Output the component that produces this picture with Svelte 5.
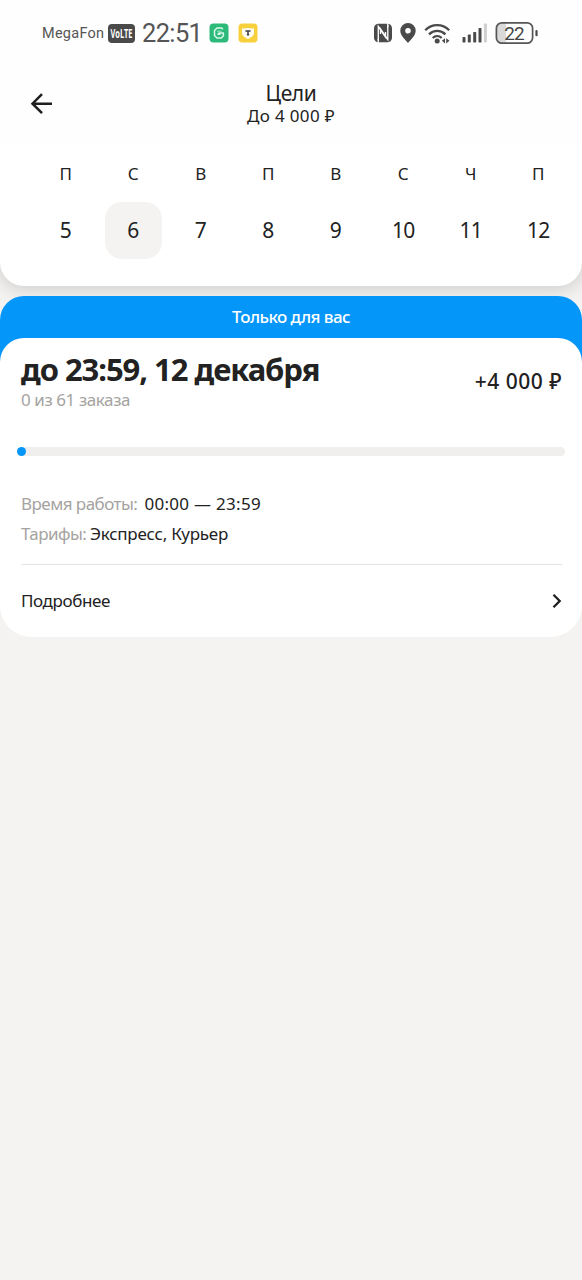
<script>
  const days = [
    ['П', 5], ['С', 6], ['В', 7], ['П', 8], ['В', 9], ['С', 10], ['Ч', 11], ['П', 12],
  ];
  const selected = 6;
</script>

<main>
  <div class="status">
    <span class="carrier">MegaFon</span>
    <span class="volte">
      <svg width="23" height="17" viewBox="0 0 23 17">
        <text x=".5" y="12.7" textLength="22" lengthAdjust="spacingAndGlyphs">VoLTE</text>
      </svg>
    </span>
    <span class="clock">22:51</span>
    <svg class="app-g" width="20" height="20" viewBox="0 0 20 20">
      <rect x=".5" y=".5" width="19" height="19" rx="4" fill="#2cba7a" />
      <path d="M14 6.200 12.600 5H8L5.500 7.600v4.800L8 15h4.200l2.200-2.300V10H10l-1 1.200h2.500" fill="none" stroke="#d9f8e9" stroke-width="1.500" stroke-linejoin="round" />
      <path d="M8 8.200h4.500" stroke="#a6e6c8" stroke-width="1" />
    </svg>
    <svg class="app-t" width="20" height="20" viewBox="0 0 20 20">
      <rect x=".5" y=".5" width="19" height="19" rx="4" fill="#f7d03c" />
      <path d="M4 5.200q3 .8 6-.4 3 1.200 6 .4v4.600c0 3-2.800 4.900-6 6.200-3.200-1.300-6-3.200-6-6.200z" fill="#fffdf2" />
      <path d="M7.400 7.900h5.200M10 7.900V12M8.900 11.800h2.200" stroke="#3b4048" stroke-width="1.500" fill="none" />
    </svg>
    <span class="spacer"></span>
    <svg width="20" height="20" viewBox="0 0 20 20">
      <rect x="1" y=".8" width="18" height="18.400" rx="4.500" fill="#4a4a4a" />
      <path d="M5.300 17.500V3.500L12.500 14V9M14.800 2.500v14L7.500 6v5" fill="none" stroke="#fff" stroke-width="1.350" />
      <path d="M5.300 16v4M14.800 0v4" stroke="#fff" stroke-width="1.350" />
    </svg>
    <svg class="pin" width="16" height="20" viewBox="0 0 16 20">
      <path fill-rule="evenodd" d="M8 0a7.700 7.700 0 0 1 7.700 7.800C15.700 12.500 10.500 17 8 20 5.500 17 .3 12.500.3 7.800A7.700 7.700 0 0 1 8 0m0 4.900a2.800 2.800 0 1 0 0 5.600 2.800 2.800 0 0 0 0-5.600" fill="#4a4a4a" />
    </svg>
    <svg class="wifi" width="27" height="21" viewBox="0 0 27 21">
      <path d="M1.200 7.200c6.800-6.700 17.200-6.700 24 0M5 11.400c4.800-4.600 11.600-4.600 16.400 0M8.700 15c2.700-2.500 6.300-2.500 9 0" fill="none" stroke="#4a4a4a" stroke-width="2.300" />
      <circle cx="13.200" cy="18" r="2.500" fill="#4a4a4a" />
      <path d="m21 15.200-3.100 2.600 3.100 2.600zM22.200 15.200l3.300 2.600-3.300 2.600z" fill="#4a4a4a" />
    </svg>
    <svg class="signal" width="26" height="20" viewBox="0 0 26 20">
      <g fill="#4a4a4a">
        <rect x=".5" y="14" width="3" height="5.500" rx=".7" />
        <rect x="5.800" y="11.500" width="3" height="8" rx=".7" />
        <rect x="11.200" y="9" width="3" height="10.500" rx=".7" />
        <rect x="16.500" y="5" width="3" height="14.500" rx=".7" />
      </g>
      <rect x="21.900" y=".5" width="3" height="19" rx=".7" fill="#d0d0d0" />
    </svg>
    <svg class="battery" width="44" height="24" viewBox="0 0 44 24">
      <path d="M7 2h4v20H7a5 5 0 0 1-5-5V7a5 5 0 0 1 5-5" fill="#d9d9d9" />
      <rect x="1.400" y="1.800" width="36.200" height="20.400" rx="5.500" fill="none" stroke="#555" stroke-width="1.700" />
      <rect x="40.400" y="9" width="2.200" height="6.200" rx="1" fill="#4a4a4a" />
      <text x="9.300" y="18.600" textLength="20.500">22</text>
    </svg>
  </div>

  <header>
    <svg class="back" width="24" height="24" viewBox="0 0 24 24" aria-hidden="true">
      <path d="M23 11.700H4M13 2.200 3.500 11.700l9.500 9.500" fill="none" stroke="#1f1f1f" stroke-width="2.500" />
    </svg>
    <div class="heading">
      <h1>Цели</h1>
      <p>До 4 000 ₽</p>
    </div>
  </header>

  <section class="week">
    {#each days as [name, date]}
      <div class="day">
        <span class="name">{name}</span>
        <span class="date" class:selected={date === selected} class:wide={date > 9}>{date}</span>
      </div>
    {/each}
  </section>

  <section class="offer">
    <div class="banner"><span>Только для вас</span></div>
    <article>
      <div class="top">
        <div>
          <h2>до 23:59, 12 декабря</h2>
          <p class="count">0 из 61 заказа</p>
        </div>
        <strong>+4 000 ₽</strong>
      </div>
      <div class="track"><i></i></div>
      <dl>
        <div class="hours"><dt>Время работы:</dt><dd>00:00 — 23:59</dd></div>
        <div class="rates"><dt>Тарифы:</dt><dd>Экспресс, Курьер</dd></div>
      </dl>
      <div class="more">
        <span>Подробнее</span>
        <svg width="10" height="16" viewBox="0 0 10 16" aria-hidden="true">
          <path d="m1.500 1.800 6.200 6.200-6.200 6.200" fill="none" stroke="#1f1f1f" stroke-width="2.300" />
        </svg>
      </div>
    </article>
  </section>
</main>

<style>
  :global(body) { background: #f4f3f1; }
  main {
    min-height: 1280px;
    overflow: hidden;
    background: #f4f3f1;
    color: #222;
    font-family: "Noto Sans", "Open Sans", sans-serif;
    font-size: 17px;
  }
  h1, h2, p, dl, dd { margin: 0; font-weight: 400; }
  svg { display: block; flex: none; }

  .status {
    position: relative;
    z-index: 1;
    display: flex;
    align-items: center;
    height: 66px;
    padding: 0 43px 0 42px;
    background: #fefefe;
    color: #555;
    box-sizing: border-box;
    white-space: nowrap;
  }
  .carrier { width: 66px; font: 14.500px Roboto, sans-serif; letter-spacing: .25px; }
  .volte { flex: none; padding: 1px 2px; border-radius: 4px; background: #4a4a4a; }
  .volte svg { overflow: visible; }
  .volte text { font: 700 11.500px "Open Sans", sans-serif; fill: #fff; }
  .clock { width: 60px; margin-left: 7px; font: 25.500px Roboto, sans-serif; letter-spacing: -.65px; }
  .app-g { margin-left: 7px; }
  .app-t { margin-left: 9px; }
  .spacer { flex: 1; }
  .pin { margin-left: 7px; }
  .wifi { margin-left: 8px; }
  .signal { margin-left: 11px; }
  .battery { margin-left: 7px; }
  .battery text { font: 19px Roboto, sans-serif; fill: #444; }

  header {
    position: relative;
    z-index: 1;
    display: grid;
    grid-template-columns: 52px 1fr 52px;
    height: 79px;
    background: #fefefe;
  }
  .back { margin: 26px 0 0 29px; }
  .heading { text-align: center; padding-top: 15px; }
  h1 { font-size: 21px; line-height: 25px; letter-spacing: -.4px; }
  .heading p { line-height: 20px; letter-spacing: .35px; }

  .week {
    display: grid;
    grid-template-columns: repeat(8, 67.500px);
    height: 141px;
    padding-left: 32px;
    background: #fff;
    border-radius: 0 0 24px 24px;
    box-shadow: 0 2px 20px rgba(0, 0, 0, .18);
    box-sizing: border-box;
  }
  .day { display: flex; flex-direction: column; align-items: center; }
  .name { height: 26px; margin-top: 16px; line-height: 25px; }
  .date {
    width: 57px;
    height: 57px;
    margin-top: 15px;
    border-radius: 17px;
    font-size: 21px;
    line-height: 56px;
    text-align: center;
  }
  .wide { letter-spacing: -.7px; }
  .selected { background: #f4f3f1; }

  .offer {
    position: relative;
    margin-top: 10px;
    border-radius: 24px 24px 32px 32px;
    background: linear-gradient(#0596fa 100px, #fff 100px);
  }
  .banner { height: 42px; color: #fff; font-weight: 500; line-height: 42px; text-align: center; letter-spacing: -.55px; }
  article {
    height: 299px;
    padding: 0 20px 0 21px;
    border-radius: 24px 24px 32px 32px;
    background: #fff;
    box-sizing: border-box;
  }
  .top { display: flex; justify-content: space-between; height: 109px; }
  h2 { padding-top: 11px; font-size: 31px; font-weight: 700; line-height: 40px; letter-spacing: -1.05px; }
  .count { line-height: 22px; color: #a5a39f; letter-spacing: -.42px; }
  strong { padding-top: 28px; font-size: 21px; font-weight: 500; line-height: 30px; letter-spacing: .5px; }
  .track { height: 9px; margin-right: -3px; border-radius: 5px; background: #f1efed; }
  .track i { display: block; width: 9px; height: 9px; margin-left: -4px; border-radius: 50%; background: #0596fa; }
  dl { padding-top: 33px; height: 109px; box-sizing: border-box; border-bottom: 1px solid #e4e3e1; }
  dl div { display: flex; height: 30px; line-height: 30px; white-space: nowrap; }
  dt { color: #a5a39f; letter-spacing: -.53px; }
  .hours dt { width: 123.500px; }
  .rates dt { width: 69px; }
  .hours dd { letter-spacing: .28px; }
  .rates dd { letter-spacing: -.25px; }
  .more { display: flex; align-items: center; justify-content: space-between; height: 71px; letter-spacing: -.4px; }
</style>
